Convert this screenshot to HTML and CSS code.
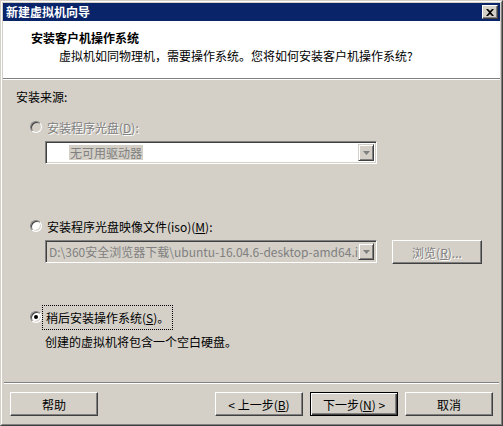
FILE: index.html
```html
<!DOCTYPE html>
<html lang="zh-CN">
<head>
  <meta charset="UTF-8">
  <title>新建虚拟机向导</title>
  <link rel="stylesheet" href="styles.css">
</head>
<body>
  <div class="window">
    <div class="frame">

      <!-- Title bar -->
      <div class="titlebar">
        <span class="title">新建虚拟机向导</span>
        <span class="close-btn">
          <svg width="8" height="7" viewBox="0 0 8 7"><path d="M0 0h2l2 2 2-2h2L5 3.5 8 7H6L4 5 2 7H0l3-3.5z" fill="#000"/></svg>
        </span>
      </div>

      <!-- Header -->
      <div class="header">
        <h1>安装客户机操作系统</h1>
        <p>虚拟机如同物理机，需要操作系统。您将如何安装客户机操作系统?</p>
      </div>
      <div class="sep"></div>

      <!-- Body -->
      <div class="content">
        <div class="group-label">安装来源:</div>

        <div class="option disabled">
          <span class="radio"></span>
          <span class="label">安装程序光盘(<u>D</u>):</span>
        </div>
        <div class="field-row">
          <div class="combo white">
            <span class="combo-text"><span class="sel">无可用驱动器</span></span>
            <span class="arrow"><svg width="7" height="4" viewBox="0 0 7 4"><path d="M0 0h7L3.5 4z" fill="#808080"/></svg></span>
          </div>
        </div>

        <div class="option iso">
          <span class="radio"></span>
          <span class="label">安装程序光盘映像文件(iso)(<u>M</u>):</span>
        </div>
        <div class="field-row">
          <div class="combo gray">
            <span class="combo-text">D:\360安全浏览器下载\ubuntu-16.04.6-desktop-amd64.is</span>
            <span class="arrow"><svg width="7" height="4" viewBox="0 0 7 4"><path d="M0 0h7L3.5 4z" fill="#808080"/></svg></span>
          </div>
          <div class="btn disabled-btn">浏览(<u>R</u>)...</div>
        </div>

        <div class="option later">
          <span class="radio checked"></span>
          <span class="label focus">稍后安装操作系统(<u>S</u>)。</span>
        </div>
        <div class="note">创建的虚拟机将包含一个空白硬盘。</div>
      </div>

      <!-- Footer -->
      <div class="sep footer-sep"></div>
      <div class="footer">
        <div class="btn">帮助</div>
        <div class="spacer"></div>
        <div class="btn">&lt; 上一步(<u>B</u>)</div>
        <div class="btn default">下一步(<u>N</u>) &gt;</div>
        <div class="btn">取消</div>
      </div>

    </div>
  </div>
</body>
</html>
```

FILE: styles.css
```css
* {
  margin: 0;
  padding: 0;
  box-sizing: border-box;
}
body {
  font-family: "Noto Sans CJK SC", "DejaVu Sans", sans-serif;
  font-size: 12px;
  color: #000;
  background-color: #d4d0c8;
  width: 503px;
  height: 426px;
  overflow: hidden;
}
.window {
  width: 503px;
  height: 426px;
  border: 1px solid;
  border-color: #d4d0c8 #404040 #404040 #d4d0c8;
}
.frame {
  height: 100%;
  border: 1px solid;
  border-color: #ffffff #808080 #808080 #ffffff;
  padding: 1px;
  display: flex;
  flex-direction: column;
}

/* Title bar */
.titlebar {
  height: 18px;
  background-color: #0a246a;
  display: flex;
  align-items: center;
  padding: 0 2px 0 3px;
}
.title {
  color: #fff;
  font-weight: bold;
  line-height: 18px;
}
.close-btn {
  margin-left: auto;
  width: 16px;
  height: 14px;
  background-color: #d4d0c8;
  border: 1px solid;
  border-color: #ffffff #404040 #404040 #ffffff;
  box-shadow: inset -1px -1px 0 #808080;
  display: flex;
  align-items: center;
  justify-content: center;
}

/* Header */
.header {
  background-color: #fff;
  height: 57px;
  padding: 9px 0 0 28px;
}
.header h1 {
  font-size: 12px;
  font-weight: bold;
  line-height: 15px;
}
.header p {
  line-height: 15px;
  margin-top: 3px;
  padding-left: 28px;
}
.sep {
  height: 2px;
  border-top: 1px solid #808080;
  border-bottom: 1px solid #ffffff;
}

/* Body */
.content {
  flex: 1;
  padding: 9px 0 0 13px;
}
.group-label {
  line-height: 15px;
}
.option {
  display: flex;
  align-items: center;
  height: 16px;
  margin: 15px 0 0 14px;
}
.option.iso {
  margin-top: 54px;
}
.option.later {
  margin-top: 45px;
}
.radio {
  width: 12px;
  height: 12px;
  border-radius: 50%;
  background: #fff;
  border: 1px solid;
  border-color: #808080 #ffffff #ffffff #808080;
  box-shadow: inset 1px 1px 0 #404040, inset -1px -1px 0 #d4d0c8;
  position: relative;
  flex-shrink: 0;
}
.radio.checked::after {
  content: "";
  position: absolute;
  left: 3px;
  top: 3px;
  width: 4px;
  height: 4px;
  border-radius: 50%;
  background: #000;
}
.option.disabled .radio {
  background: #d4d0c8;
}
.label {
  margin-left: 4px;
  line-height: 15px;
  padding: 0 1px;
}
.option.disabled .label {
  color: #808080;
  text-shadow: 1px 1px 0 #fff;
}
.label.focus {
  margin-left: 1px;
  padding: 4px 3px;
  outline: 1px dotted #000;
}
.field-row {
  display: flex;
  gap: 15px;
  margin: 6px 0 0 29px;
}
.combo {
  width: 332px;
  height: 23px;
  border: 1px solid;
  border-color: #808080 #ffffff #ffffff #808080;
  box-shadow: inset 1px 1px 0 #404040, inset -1px -1px 0 #d4d0c8;
  display: flex;
  align-items: center;
  padding: 2px;
}
.combo.white {
  background: #fff;
}
.combo.gray {
  background: #d4d0c8;
}
.combo-text {
  flex: 1;
  overflow: hidden;
  white-space: nowrap;
  color: #808080;
  padding-left: 1px;
  line-height: 15px;
}
.combo.white .combo-text {
  padding-left: 21px;
}
.sel {
  background: #d4d0c8;
  padding: 0 1px;
}
.arrow {
  width: 16px;
  height: 17px;
  background: #d4d0c8;
  border: 1px solid;
  border-color: #d4d0c8 #404040 #404040 #d4d0c8;
  box-shadow: inset 1px 1px 0 #fff, inset -1px -1px 0 #808080;
  display: flex;
  align-items: center;
  justify-content: center;
  flex-shrink: 0;
}
.note {
  margin: 9px 0 0 29px;
  line-height: 15px;
}

/* Buttons */
.btn {
  width: 88px;
  height: 24px;
  background: #d4d0c8;
  border: 1px solid;
  border-color: #ffffff #404040 #404040 #ffffff;
  box-shadow: inset -1px -1px 0 #808080;
  display: flex;
  align-items: center;
  justify-content: center;
  line-height: 15px;
}
.btn.default {
  border: 1px solid #000;
  box-shadow: inset 1px 1px 0 #fff, inset -1px -1px 0 #404040, inset -2px -2px 0 #808080;
}
.disabled-btn {
  width: 90px;
  color: #808080;
  text-shadow: 1px 1px 0 #fff;
}
.footer-sep {
  margin: 0 1px;
}
.footer {
  display: flex;
  gap: 7px;
  padding: 8px 7px 0 7px;
  height: 39px;
}
.spacer {
  flex: 1;
}
u {
  text-decoration: underline;
}
```
